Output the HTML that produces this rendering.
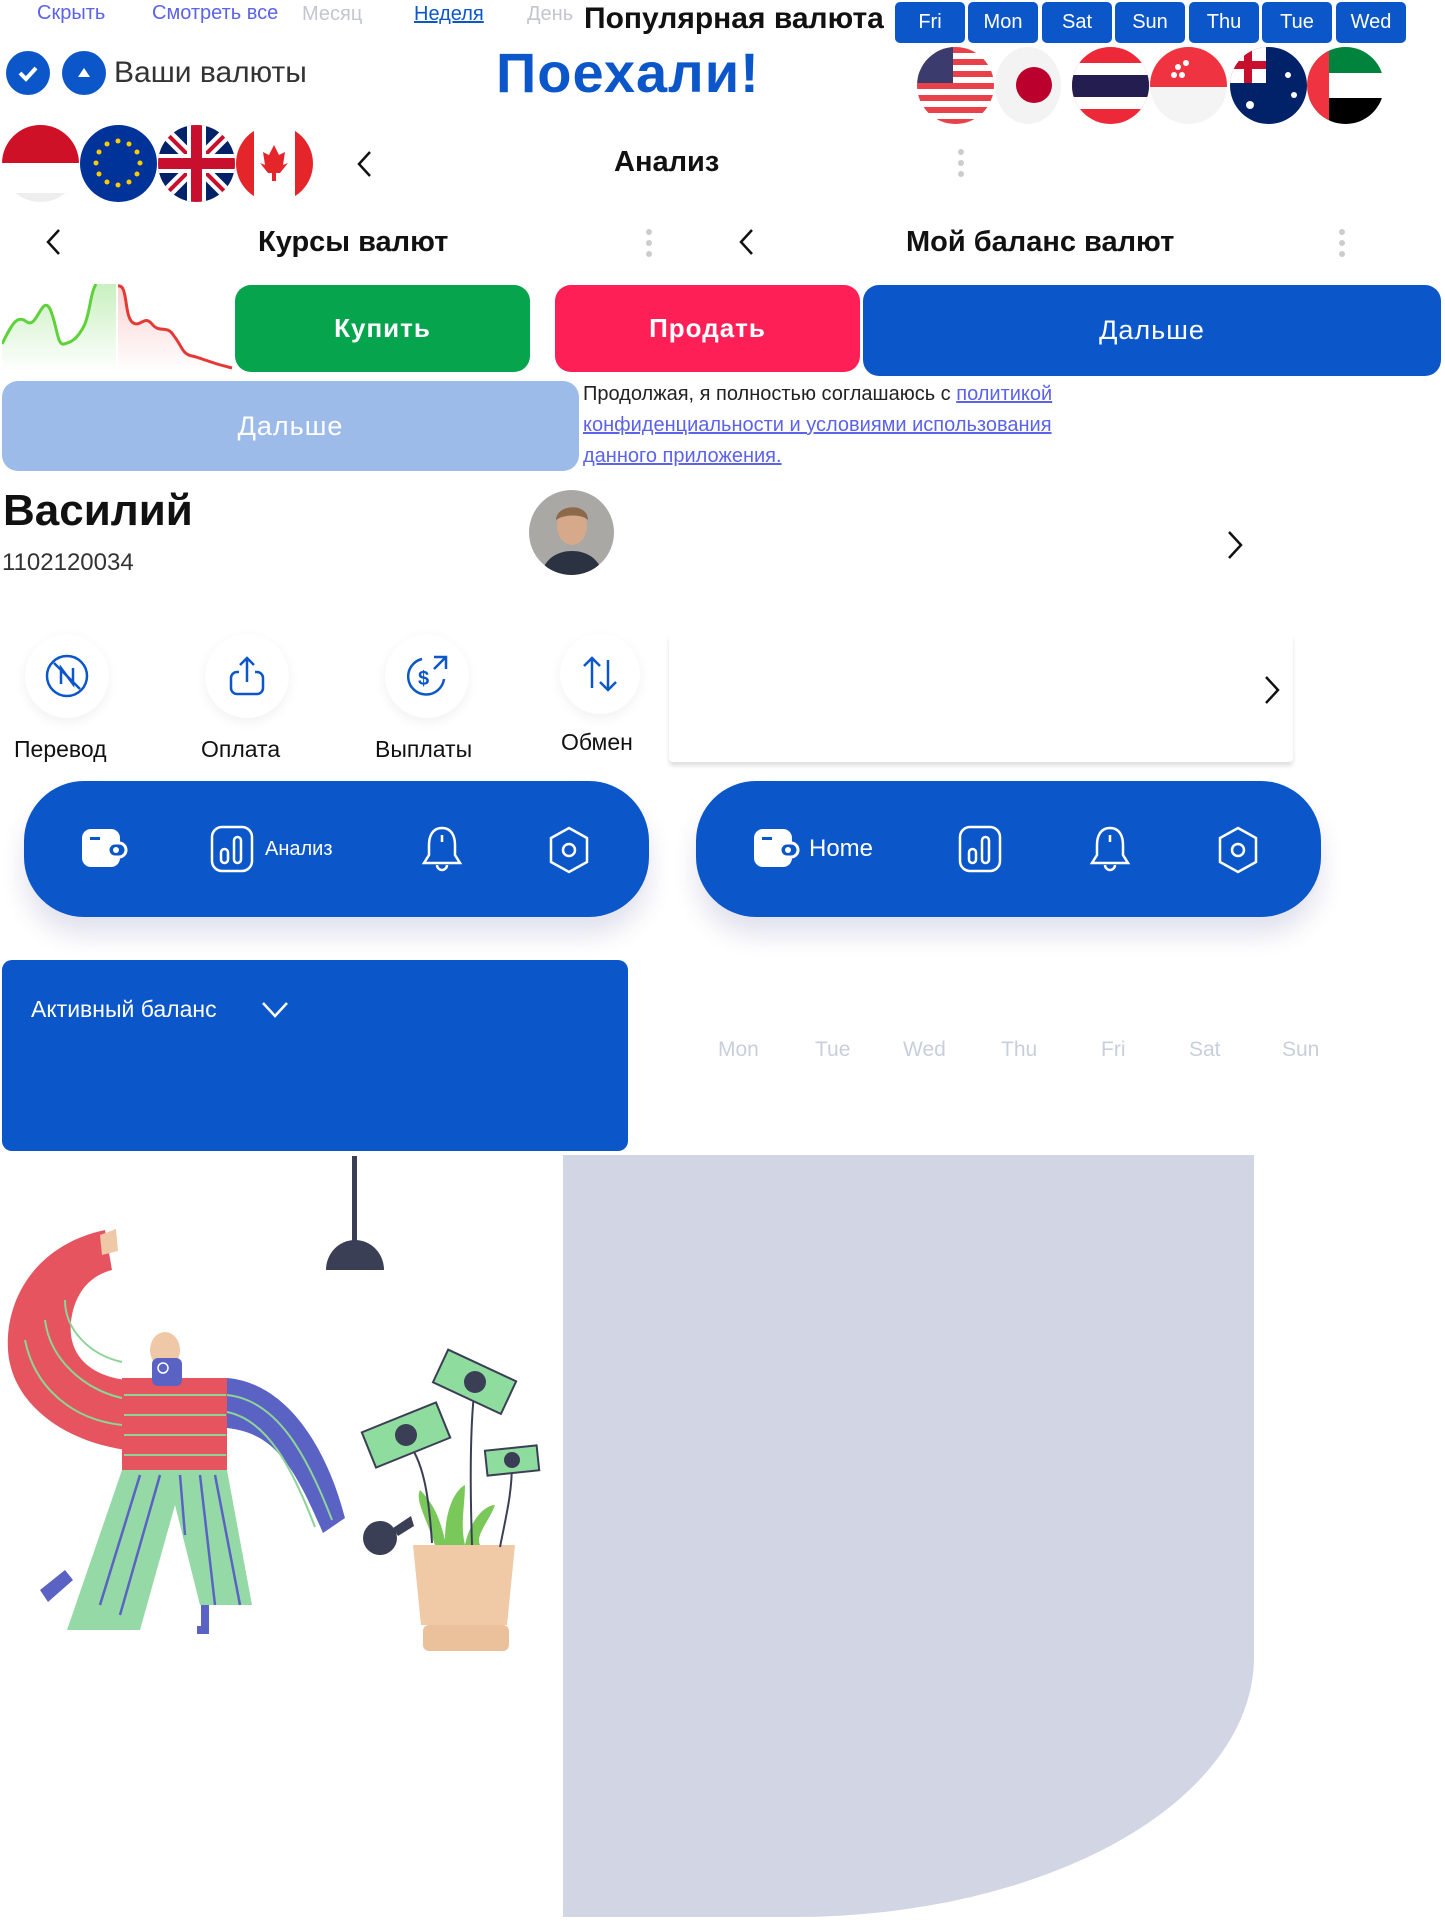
<!DOCTYPE html>
<html><head><meta charset="utf-8"><style>
*{margin:0;padding:0;box-sizing:border-box}
body{width:1445px;height:1921px;background:#fff;position:relative;overflow:hidden;font-family:"Liberation Sans",sans-serif;color:#111}
.a{position:absolute}
.t{position:absolute;white-space:nowrap}
.tab{position:absolute;top:2px;width:70px;height:41px;background:#0b57c9;color:#fff;font-size:20px;text-align:center;line-height:41px;border-radius:5px}
.flag{position:absolute;width:77px;height:77px;border-radius:50%;overflow:hidden}
.btn{position:absolute;color:#fff;font-size:26px;font-weight:bold;display:flex;align-items:center;justify-content:center;border-radius:16px;letter-spacing:1px}
.ac{position:absolute;top:634px;width:84px;height:84px;border-radius:50%;background:#fff;box-shadow:0 4px 12px rgba(0,0,0,.06);display:flex;align-items:center;justify-content:center}
.nav{position:absolute;top:781px;height:136px;width:625px;background:#0b57c9;border-radius:60px;box-shadow:0 18px 24px rgba(60,60,140,.15)}
.dots{position:absolute;width:6px}
.dots i{display:block;width:6px;height:6px;border-radius:50%;background:#ccc;margin-bottom:5px}
.wk{position:absolute;top:1036px;color:#c8cfdc;font-size:21px}
</style></head><body>

<div class="t" style="left:37px;top:2px;font-size:20px;color:#5b63e8">Скрыть</div>
<div class="t" style="left:152px;top:2px;font-size:20px;color:#5b63e8">Смотреть все</div>
<div class="t" style="left:302px;top:3px;font-size:20px;color:#c3c6cf">Месяц</div>
<div class="t" style="left:414px;top:3px;font-size:20px;color:#0b57c9;text-decoration:underline">Неделя</div>
<div class="t" style="left:527px;top:3px;font-size:20px;color:#c3c6cf">День</div>
<div class="t" style="left:584px;top:2px;font-size:30px;font-weight:600;color:#111">Популярная валюта</div>
<div class="tab" style="left:895px">Fri</div>
<div class="tab" style="left:968px">Mon</div>
<div class="tab" style="left:1042px">Sat</div>
<div class="tab" style="left:1115px">Sun</div>
<div class="tab" style="left:1189px">Thu</div>
<div class="tab" style="left:1262px">Tue</div>
<div class="tab" style="left:1336px">Wed</div>

<div class="a" style="left:6px;top:51px;width:44px;height:44px;border-radius:50%;background:#0b57c9"><svg width="44" height="44"><path d="M14 22l6 6 10-11" stroke="#fff" stroke-width="4" fill="none"/></svg></div>
<div class="a" style="left:62px;top:51px;width:44px;height:44px;border-radius:50%;background:#0b57c9"><svg width="44" height="44"><path d="M16 26l6-9 6 9z" fill="#fff"/></svg></div>
<div class="t" style="left:114px;top:56px;font-size:30px;color:#333">Ваши валюты</div>
<div class="t" style="left:496px;top:40px;font-size:56px;font-weight:bold;color:#0b57c9;letter-spacing:1px">Поехали!</div>

<div class="flag" style="left:917px;top:47px"><svg width="77" height="77"><rect width="77" height="77" fill="#fff"/><g fill="#e9414a"><rect y="0" width="77" height="6"/><rect y="12" width="77" height="6"/><rect y="24" width="77" height="6"/><rect y="36" width="77" height="6"/><rect y="48" width="77" height="6"/><rect y="60" width="77" height="6"/><rect y="72" width="77" height="6"/></g><rect width="36" height="36" fill="#3c3b6e"/></svg></div>
<div class="flag" style="left:995px;top:47px;width:66px"><svg width="66" height="77"><rect width="66" height="77" fill="#f3f3f3"/><circle cx="39" cy="38" r="18" fill="#bc002d"/></svg></div>
<div class="flag" style="left:1072px;top:47px"><svg width="77" height="77"><rect width="77" height="77" fill="#ed2939"/><rect y="16" width="77" height="12" fill="#fff"/><rect y="28" width="77" height="22" fill="#241d4f"/><rect y="50" width="77" height="12" fill="#fff"/></svg></div>
<div class="flag" style="left:1150px;top:47px"><svg width="77" height="77"><rect width="77" height="77" fill="#f4f4f4"/><rect width="77" height="40" fill="#ef3340"/><circle cx="28" cy="20" r="3" fill="#fff"/><circle cx="36" cy="16" r="3" fill="#fff"/><circle cx="24" cy="28" r="3" fill="#fff"/><circle cx="32" cy="28" r="3" fill="#fff"/></svg></div>
<div class="flag" style="left:1230px;top:47px"><svg width="77" height="77"><rect width="77" height="77" fill="#012169"/><rect x="0" y="0" width="36" height="36" fill="#fff"/><rect x="14" y="0" width="8" height="36" fill="#c8102e"/><rect x="0" y="14" width="36" height="8" fill="#c8102e"/><circle cx="20" cy="58" r="4" fill="#fff"/><circle cx="58" cy="28" r="3" fill="#fff"/><circle cx="64" cy="48" r="3" fill="#fff"/></svg></div>
<div class="flag" style="left:1307px;top:47px"><svg width="77" height="77"><rect width="77" height="26" fill="#00843d"/><rect y="26" width="77" height="25" fill="#fff"/><rect y="51" width="77" height="26" fill="#000"/><rect width="22" height="77" fill="#ef3340"/></svg></div>

<div class="flag" style="left:2px;top:125px"><svg width="77" height="77"><rect width="77" height="77" fill="#eee"/><rect width="77" height="38" fill="#ce1126"/><rect y="38" width="77" height="30" fill="#fff"/></svg></div>
<div class="flag" style="left:80px;top:125px"><svg width="77" height="77"><rect width="77" height="77" fill="#003399"/><g fill="#ffcc00"><circle cx="38" cy="16" r="2.5"/><circle cx="49" cy="19" r="2.5"/><circle cx="57" cy="27" r="2.5"/><circle cx="60" cy="38" r="2.5"/><circle cx="57" cy="49" r="2.5"/><circle cx="49" cy="57" r="2.5"/><circle cx="38" cy="60" r="2.5"/><circle cx="27" cy="57" r="2.5"/><circle cx="19" cy="49" r="2.5"/><circle cx="16" cy="38" r="2.5"/><circle cx="19" cy="27" r="2.5"/><circle cx="27" cy="19" r="2.5"/></g></svg></div>
<div class="flag" style="left:158px;top:125px"><svg width="77" height="77"><rect width="77" height="77" fill="#012169"/><path d="M0 0L77 77M77 0L0 77" stroke="#fff" stroke-width="12"/><path d="M0 0L77 77M77 0L0 77" stroke="#c8102e" stroke-width="4"/><rect x="29" width="19" height="77" fill="#fff"/><rect y="29" width="77" height="19" fill="#fff"/><rect x="33" width="11" height="77" fill="#c8102e"/><rect y="33" width="77" height="11" fill="#c8102e"/></svg></div>
<div class="flag" style="left:236px;top:125px"><svg width="77" height="77"><rect width="77" height="77" fill="#fff"/><rect width="18" height="77" fill="#e4262a"/><rect x="59" width="18" height="77" fill="#e4262a"/><path d="M38 20l5 10 6-3-2 13 5-2-8 10h-4v8h-4v-8h-4l-8-10 5 2-2-13 6 3z" fill="#e4262a"/></svg></div>

<svg class="a" style="left:355px;top:150px" width="20" height="28"><path d="M15 2L4 14l11 12" stroke="#111" stroke-width="2.5" fill="none"/></svg>
<div class="t" style="left:614px;top:146px;font-size:29px;font-weight:600">Анализ</div>
<div class="dots" style="left:958px;top:149px"><i></i><i></i><i></i></div>

<svg class="a" style="left:44px;top:228px" width="20" height="28"><path d="M15 2L4 14l11 12" stroke="#111" stroke-width="2.5" fill="none"/></svg>
<div class="t" style="left:258px;top:226px;font-size:29px;font-weight:600">Курсы валют</div>
<div class="dots" style="left:646px;top:229px"><i></i><i></i><i></i></div>
<svg class="a" style="left:737px;top:228px" width="20" height="28"><path d="M15 2L4 14l11 12" stroke="#111" stroke-width="2.5" fill="none"/></svg>
<div class="t" style="left:906px;top:226px;font-size:29px;font-weight:600">Мой баланс валют</div>
<div class="dots" style="left:1339px;top:229px"><i></i><i></i><i></i></div>

<svg class="a" style="left:2px;top:284px" width="232" height="88">
<defs><linearGradient id="g1" x1="0" y1="0" x2="0" y2="1"><stop offset="0" stop-color="#c9f0c0"/><stop offset="1" stop-color="#fff"/></linearGradient><linearGradient id="g2" x1="0" y1="0" x2="0" y2="1"><stop offset="0" stop-color="#fbd2d2"/><stop offset="1" stop-color="#fff"/></linearGradient></defs>
<path d="M0 60C10 40 15 30 25 38 35 45 40 10 48 25 55 40 55 62 62 60 70 58 75 55 82 42 88 30 88 10 94 0L114 0V88H0Z" fill="url(#g1)"/>
<path d="M0 60C10 40 15 30 25 38 35 45 40 10 48 25 55 40 55 62 62 60 70 58 75 55 82 42 88 30 88 10 94 0" stroke="#5fd13a" stroke-width="3" fill="none"/>
<path d="M116 2C126 0 122 30 130 38 138 45 142 30 150 40 158 50 165 40 172 52 180 62 180 70 190 72 200 74 205 78 230 84V88H116Z" fill="url(#g2)"/>
<path d="M116 2C126 0 122 30 130 38 138 45 142 30 150 40 158 50 165 40 172 52 180 62 180 70 190 72 200 74 205 78 230 84" stroke="#e53935" stroke-width="3" fill="none"/>
</svg>

<div class="btn" style="left:235px;top:285px;width:295px;height:87px;background:#07a44e">Купить</div>
<div class="btn" style="left:555px;top:285px;width:305px;height:87px;background:#ff1f57">Продать</div>
<div class="btn" style="left:863px;top:285px;width:578px;height:91px;background:#0b57c9;font-weight:normal;font-size:27px">Дальше</div>
<div class="btn" style="left:2px;top:381px;width:577px;height:90px;background:#9dbbe9;font-weight:normal;font-size:27px">Дальше</div>
<div class="a" style="left:583px;top:379px;font-size:20px;line-height:31px;color:#222;width:530px">Продолжая, я полностью соглашаюсь с <span style="color:#5b63e8;text-decoration:underline">политикой конфиденциальности и условиями использования данного приложения.</span></div>

<div class="t" style="left:3px;top:486px;font-size:44px;font-weight:bold">Василий</div>
<div class="t" style="left:2px;top:549px;font-size:24px;color:#333">1102120034</div>
<div class="a" style="left:529px;top:490px;width:85px;height:85px;border-radius:50%;background:#a9a8a4;overflow:hidden"><svg width="85" height="85"><ellipse cx="43" cy="36" rx="15" ry="19" fill="#d7a98b"/><path d="M27 30c0-16 32-18 32 0-6-6-24-6-32 0z" fill="#8a6a4a"/><path d="M12 85c4-18 18-24 31-24s27 6 31 24z" fill="#2b3342"/></svg></div>
<svg class="a" style="left:1225px;top:530px" width="20" height="30"><path d="M4 2l12 13-12 13" stroke="#111" stroke-width="2.5" fill="none"/></svg>

<div class="ac" style="left:25px"><svg width="44" height="44" fill="none" stroke="#0b57c9" stroke-width="2.5"><circle cx="22" cy="22" r="20"/><path d="M9 9l26 26M16 30V14l12 16V14"/></svg></div>
<div class="ac" style="left:205px"><svg width="44" height="44" fill="none" stroke="#0b57c9" stroke-width="2.5"><path d="M22 28V4M15 11l7-7 7 7M14 18h-2a6 6 0 00-6 6v10a6 6 0 006 6h20a6 6 0 006-6V24a6 6 0 00-6-6h-2"/></svg></div>
<div class="ac" style="left:385px"><svg width="46" height="46" fill="none" stroke="#0b57c9" stroke-width="2.5"><path d="M18 6A18 18 0 1040 26M30 4h12v12M42 4L30 16"/><text x="14" y="32" font-size="20" font-weight="bold" fill="#0b57c9" stroke="none" font-family="Liberation Sans">$</text></svg></div>
<div class="ac" style="left:560px;top:634px;width:80px;height:80px"><svg width="40" height="40" fill="none" stroke="#0b57c9" stroke-width="2.5"><path d="M12 34V4M4 12l8-8 8 8M28 6v30M20 28l8 8 8-8"/></svg></div>
<div class="t" style="left:14px;top:736px;font-size:23px">Перевод</div>
<div class="t" style="left:201px;top:736px;font-size:23px">Оплата</div>
<div class="t" style="left:375px;top:736px;font-size:23px">Выплаты</div>
<div class="t" style="left:561px;top:729px;font-size:23px">Обмен</div>

<div class="a" style="left:669px;top:633px;width:624px;height:129px;background:#fff;box-shadow:0 4px 4px rgba(0,0,0,.12);border-radius:4px"></div>
<svg class="a" style="left:1262px;top:675px" width="20" height="30"><path d="M4 2l12 13-12 13" stroke="#111" stroke-width="2.5" fill="none"/></svg>

<div class="nav" style="left:24px">
<svg class="a" style="left:58px;top:48px" width="46" height="40"><rect x="0" y="0" width="38" height="38" rx="9" fill="#fff"/><rect x="8" y="8" width="10" height="3" fill="#0b57c9"/><rect x="26" y="14" width="18" height="14" rx="7" fill="#0b57c9" stroke="#fff" stroke-width="3"/><circle cx="34" cy="21" r="3" fill="#fff"/></svg>
<svg class="a" style="left:186px;top:44px" width="46" height="48" fill="none" stroke="#fff" stroke-width="2.5"><rect x="2" y="2" width="40" height="44" rx="10"/><rect x="11" y="24" width="7" height="14" rx="3.5"/><rect x="24" y="12" width="7" height="26" rx="3.5"/></svg>
<div class="t" style="left:241px;top:57px;color:#fff;font-size:20px">Анализ</div>
<svg class="a" style="left:396px;top:44px" width="44" height="50" fill="none" stroke="#fff" stroke-width="2.5"><path d="M22 3C12 3 9 12 9 20v10L4 38h36l-5-8V20c0-8-3-17-13-17zM17 40a5 5 0 0010 0M22 10v7"/></svg>
<svg class="a" style="left:523px;top:44px" width="44" height="50" fill="none" stroke="#fff" stroke-width="2.5"><path d="M22 3l18 10v24L22 47 4 37V13z"/><circle cx="22" cy="25" r="6"/></svg>
</div>
<div class="nav" style="left:696px">
<svg class="a" style="left:58px;top:48px" width="46" height="40"><rect x="0" y="0" width="38" height="38" rx="9" fill="#fff"/><rect x="8" y="8" width="10" height="3" fill="#0b57c9"/><rect x="26" y="14" width="18" height="14" rx="7" fill="#0b57c9" stroke="#fff" stroke-width="3"/><circle cx="34" cy="21" r="3" fill="#fff"/></svg>
<div class="t" style="left:113px;top:54px;color:#fff;font-size:24px">Home</div>
<svg class="a" style="left:262px;top:44px" width="46" height="48" fill="none" stroke="#fff" stroke-width="2.5"><rect x="2" y="2" width="40" height="44" rx="10"/><rect x="11" y="24" width="7" height="14" rx="3.5"/><rect x="24" y="12" width="7" height="26" rx="3.5"/></svg>
<svg class="a" style="left:392px;top:44px" width="44" height="50" fill="none" stroke="#fff" stroke-width="2.5"><path d="M22 3C12 3 9 12 9 20v10L4 38h36l-5-8V20c0-8-3-17-13-17zM17 40a5 5 0 0010 0M22 10v7"/></svg>
<svg class="a" style="left:520px;top:44px" width="44" height="50" fill="none" stroke="#fff" stroke-width="2.5"><path d="M22 3l18 10v24L22 47 4 37V13z"/><circle cx="22" cy="25" r="6"/></svg>
</div>

<div class="a" style="left:2px;top:960px;width:626px;height:191px;background:#0b57c9;border-radius:10px"></div>
<div class="t" style="left:31px;top:996px;color:#fff;font-size:23px">Активный баланс</div>
<svg class="a" style="left:260px;top:1000px" width="30" height="20"><path d="M3 3l12 13L27 3" stroke="#fff" stroke-width="2.5" fill="none"/></svg>

<div class="wk" style="left:718px;top:1038px">Mon</div>
<div class="wk" style="left:815px;top:1038px">Tue</div>
<div class="wk" style="left:903px;top:1038px">Wed</div>
<div class="wk" style="left:1001px;top:1038px">Thu</div>
<div class="wk" style="left:1101px;top:1038px">Fri</div>
<div class="wk" style="left:1189px;top:1038px">Sat</div>
<div class="wk" style="left:1282px;top:1038px">Sun</div>

<div class="a" style="left:563px;top:1155px;width:691px;height:762px;background:#d1d5e4;border-bottom-right-radius:460px 260px"></div>

<svg class="a" style="left:0;top:1150px" width="560" height="520">
<rect x="352" y="6" width="5" height="100" fill="#3b3f55"/>
<path d="M326 120a29 30 0 0158 0z" fill="#3b3f55"/>
<path d="M105 80C35 95 5 150 8 200c3 50 50 90 118 100l0-70C85 225 65 200 72 165c5-25 20-40 40-45z" fill="#e5545f"/>
<path d="M100 85l16-6 2 22-16 4z" fill="#efc8a8"/>
<rect x="122" y="228" width="105" height="92" fill="#e5545f"/>
<g stroke="#8ed39a" stroke-width="2" fill="none"><path d="M124 245h102M124 265h102M124 285h102M124 305h102M25 190c10 50 50 80 97 85M45 170c5 40 40 70 77 78M65 150c0 30 25 55 57 62"/></g>
<path d="M227 228c60 5 100 70 118 140l-22 15c-30-70-50-100-96-105z" fill="#5a63c4"/>
<path d="M227 245c50 5 80 60 105 125M227 262c40 8 65 55 88 115" stroke="#8ed39a" stroke-width="2" fill="none"/>
<ellipse cx="165" cy="200" rx="15" ry="18" fill="#efc8a8"/>
<rect x="152" y="208" width="30" height="28" rx="6" fill="#5a63c4"/>
<circle cx="163" cy="218" r="5" fill="none" stroke="#fff" stroke-width="1.5"/>
<path d="M122 320h105l25 135H200l-25-100-35 125H67z" fill="#95d9a7"/>
<g stroke="#5a63c4" stroke-width="2.5"><path d="M140 325l-40 130M160 325l-40 140M200 325l15 130M215 325l25 130M180 325l5 60"/></g>
<path d="M40 440l25-20 8 10-25 22z" fill="#5a63c4"/>
<path d="M205 455v25h-8" stroke="#5a63c4" stroke-width="8" fill="none"/>
<circle cx="380" cy="388" r="17" fill="#3b3f55"/>
<path d="M393 378l18-12 3 10-16 10z" fill="#3b3f55"/>
<path d="M413 395h102l-8 80h-86z" fill="#f0c9a6"/>
<rect x="423" y="475" width="86" height="26" rx="6" fill="#ebc19c"/>
<path d="M435 395c-10-30-20-45-15-55 15 15 20 30 25 50 0-30 10-50 20-55 0 20-5 40 0 60 5-25 20-40 30-40-5 15-20 30-15 40z" fill="#7ac75a"/>
<path d="M404 288c20 20 25 60 28 105M475 235c-5 40-5 100-3 160M512 312c0 30-5 50-12 85" stroke="#3b3f55" stroke-width="2" fill="none"/>
<g fill="#8fdc9f" stroke="#3b3f55" stroke-width="2"><rect x="366" y="266" width="80" height="38" transform="rotate(-22 406 285)"/><rect x="437" y="214" width="75" height="36" transform="rotate(25 475 232)"/><rect x="486" y="298" width="52" height="25" transform="rotate(-6 512 310)"/></g>
<g fill="#3b3f55"><circle cx="406" cy="285" r="11"/><circle cx="475" cy="232" r="11"/><circle cx="512" cy="310" r="8"/></g>
</svg>
</body></html>
